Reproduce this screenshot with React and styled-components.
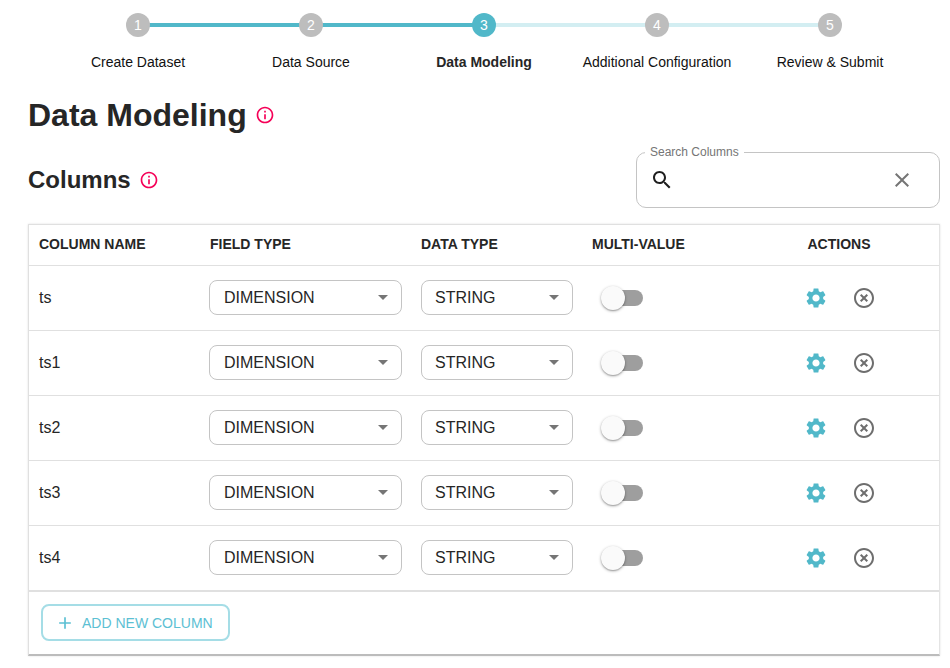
import React from "react";
import styled, { createGlobalStyle } from "styled-components";

const Global = createGlobalStyle`
  html, body { margin: 0; padding: 0; background: #fff; }
  body { font-family: "Liberation Sans", Arial, sans-serif; color: #262626; }
`;

const Page = styled.div`
  width: 950px;
  height: 668px;
  overflow: hidden;
  box-sizing: border-box;
  padding: 13px 10px 0 28px;
`;

const Stepper = styled.ol`
  list-style: none;
  margin: 0 0 0 23.5px;
  padding: 0;
  display: grid;
  grid-template-columns: repeat(5, 173px);
`;

const Step = styled.li`
  position: relative;
  display: flex;
  flex-direction: column;
  align-items: center;
  &::after {
    content: "";
    display: ${(p) => (p.$last ? "none" : "block")};
    position: absolute;
    left: calc(50% + 10px);
    width: 155px;
    top: 10px;
    height: 4px;
    background: ${(p) => (p.$done ? "#51b8c9" : "#d3eef2")};
  }
`;

const StepDot = styled.span`
  position: relative;
  z-index: 1;
  width: 24px;
  height: 24px;
  border-radius: 50%;
  background: ${(p) => (p.$active ? "#51b8c9" : "#bdbdbd")};
  color: #fff;
  font-size: 14px;
  line-height: 24px;
  text-align: center;
`;

const StepLabel = styled.span`
  margin-top: 15px;
  font-size: 14px;
  line-height: 20px;
  font-weight: ${(p) => (p.$active ? 700 : 400)};
  color: ${(p) => (p.$active ? "#262626" : "#111")};
  white-space: nowrap;
`;

const TitleRow = styled.div`
  display: flex;
  align-items: center;
  gap: 8px;
  margin-top: 21px;
  height: 44px;
`;

const Title = styled.h1`
  margin: 0;
  font-size: 32px;
  line-height: 44px;
  font-weight: 700;
  color: #262626;
`;

const ColumnsBar = styled.div`
  display: flex;
  justify-content: space-between;
  align-items: center;
  height: 56px;
  margin-top: 15px;
`;

const Heading = styled.div`
  display: flex;
  align-items: center;
  gap: 8px;
`;

const SubTitle = styled.h2`
  margin: 0;
  font-size: 24px;
  line-height: 32px;
  font-weight: 700;
  color: #262626;
`;

const SearchBox = styled.fieldset`
  align-self: flex-end;
  margin: 0;
  box-sizing: border-box;
  width: 304px;
  height: 63px;
  padding: 0 8px 6px 8px;
  border: 1px solid #c4c4c4;
  border-radius: 10px;
  display: flex;
  align-items: center;
  justify-content: space-between;
`;

const SearchLegend = styled.legend`
  padding: 0 5px;
  font-size: 12px;
  line-height: 14px;
  color: #757575;
`;

const SearchIconSlot = styled.span`
  display: flex;
  margin-left: 5px;
`;

const ClearSlot = styled.span`
  display: flex;
  margin-right: 17px;
`;

const Table = styled.div`
  box-sizing: border-box;
  width: 912px;
  height: 432px;
  margin-top: 16px;
  border: 1px solid #e0e0e0;
  border-right-color: #e4e4e4;
  border-bottom: 2px solid #bcbcbc;
  box-shadow: 0 0 2px rgba(0, 0, 0, 0.12);
`;

const Row = styled.div`
  display: grid;
  grid-template-columns: 170px 212px 171px 200px 96px;
  padding-left: 10px;
  padding-bottom: ${(p) => (p.$header ? "2px" : "0")};
  align-items: center;
  height: ${(p) => (p.$header ? "41px" : "65px")};
  box-sizing: border-box;
  border-bottom: 1px solid #e0e0e0;
`;

const HeadCell = styled.div`
  font-size: 14px;
  font-weight: 700;
  color: #262626;
  text-align: ${(p) => (p.$center ? "center" : "left")};
  padding-right: ${(p) => (p.$center ? "2px" : "0")};
  padding-left: ${(p) => p.$inset || 0}px;
  white-space: nowrap;
`;

const NameCell = styled.div`
  font-size: 16px;
  color: #262626;
`;

const Select = styled.div`
  box-sizing: border-box;
  width: ${(p) => p.$w}px;
  height: 35px;
  margin-top: -1px;
  margin-bottom: 1px;
  border: 1px solid #c4c4c4;
  border-radius: 8px;
  padding: 0 6px 0 ${(p) => p.$pad}px;
  display: flex;
  align-items: center;
  justify-content: space-between;
  font-size: 16px;
  color: #262626;
`;

const SelectText = styled.span`
  position: relative;
  top: 0.5px;
`;

const SwitchTrack = styled.span`
  position: relative;
  display: block;
  width: 31px;
  height: 16px;
  margin-left: 20px;
  border-radius: 8px;
  background: #9e9e9e;
`;

const SwitchThumb = styled.span`
  position: absolute;
  left: -11px;
  top: -4px;
  width: 24px;
  height: 24px;
  border-radius: 50%;
  background: #fafafa;
  box-shadow: 0 1px 3px rgba(0, 0, 0, 0.35), 0 1px 1px rgba(0, 0, 0, 0.14);
`;

const Actions = styled.div`
  display: grid;
  grid-template-columns: 48px 48px;
  justify-items: center;
  align-items: center;
`;

const Footer = styled.div`
  border-top: 1px solid #e0e0e0;
  padding: 12px 12px;
`;

const AddButton = styled.button`
  box-sizing: border-box;
  width: 189px;
  height: 37px;
  display: flex;
  align-items: center;
  gap: 7px;
  padding: 0 0 0 12px;
  background: #fff;
  border: 2px solid #a5dde6;
  border-radius: 8px;
  font-family: "Liberation Sans", Arial, sans-serif;
  font-size: 14px;
  color: #5cc0d3;
  white-space: nowrap;
`;

const Icon = ({ d, size = 24, color = "currentColor" }) => (
  <svg width={size} height={size} viewBox="0 0 24 24" fill={color} aria-hidden="true" style={{ display: "block" }}>
    <path d={d} />
  </svg>
);

const P = {
  info: "M11 7h2v2h-2zm0 4h2v6h-2zm1-9C6.48 2 2 6.48 2 12s4.48 10 10 10 10-4.48 10-10S17.52 2 12 2zm0 18c-4.41 0-8-3.59-8-8s3.59-8 8-8 8 3.59 8 8-3.59 8-8 8z",
  search: "M15.5 14h-.79l-.28-.27C15.41 12.59 16 11.11 16 9.5 16 5.91 13.09 3 9.5 3S3 5.91 3 9.5 5.91 16 9.5 16c1.61 0 3.09-.59 4.23-1.57l.27.28v.79l5 4.99L20.49 19l-4.99-5zm-6 0C7.01 14 5 11.99 5 9.5S7.01 5 9.5 5 14 7.01 14 9.5 11.99 14 9.5 14z",
  close: "M19 6.41L17.59 5 12 10.59 6.41 5 5 6.41 10.59 12 5 17.59 6.41 19 12 13.41 17.59 19 19 17.59 13.41 12 19 6.41z",
  add: "M19 13h-6v6h-2v-6H5v-2h6V5h2v6h6v2z",
  drop: "M7 10l5 5 5-5z",
  gear: "M19.14,12.94c0.04-0.3,0.06-0.61,0.06-0.94c0-0.32-0.02-0.64-0.07-0.94l2.03-1.58c0.18-0.14,0.23-0.41,0.12-0.61 l-1.92-3.32c-0.12-0.22-0.37-0.29-0.59-0.22l-2.39,0.96c-0.5-0.38-1.03-0.7-1.62-0.94L14.4,2.81c-0.04-0.24-0.24-0.41-0.48-0.41 h-3.84c-0.24,0-0.43,0.17-0.47,0.41L9.25,5.35C8.66,5.59,8.12,5.92,7.63,6.29L5.24,5.33c-0.22-0.08-0.47,0-0.59,0.22L2.74,8.87 C2.62,9.08,2.66,9.34,2.86,9.48l2.03,1.58C4.84,11.36,4.8,11.69,4.8,12s0.02,0.64,0.07,0.94l-2.03,1.58 c-0.18,0.14-0.23,0.41-0.12,0.61l1.92,3.32c0.12,0.22,0.37,0.29,0.59,0.22l2.39-0.96c0.5,0.38,1.03,0.7,1.62,0.94l0.36,2.54 c0.05,0.24,0.24,0.41,0.48,0.41h3.84c0.24,0,0.44-0.17,0.47-0.41l0.36-2.54c0.59-0.24,1.13-0.56,1.62-0.94l2.39,0.96 c0.22,0.08,0.47,0,0.59-0.22l1.92-3.32c0.12-0.22,0.07-0.47-0.12-0.61L19.14,12.94z M12,15.6c-1.98,0-3.6-1.62-3.6-3.6 s1.62-3.6,3.6-3.6s3.6,1.62,3.6,3.6S13.98,15.6,12,15.6z",
  off: "M14.59 8L12 10.59 9.41 8 8 9.41 10.59 12 8 14.59 9.41 16 12 13.41 14.59 16 16 14.59 13.41 12 16 9.41 14.59 8zM12 2C6.47 2 2 6.47 2 12s4.47 10 10 10 10-4.47 10-10S17.53 2 12 2zm0 18c-4.41 0-8-3.59-8-8s3.59-8 8-8 8 3.59 8 8-3.59 8-8 8z",
};

const steps = ["Create Dataset", "Data Source", "Data Modeling", "Additional Configuration", "Review & Submit"];
const rows = ["ts", "ts1", "ts2", "ts3", "ts4"];

export default function App() {
  return (
    <Page>
      <Global />
      <Stepper>
        {steps.map((s, i) => (
          <Step key={s} $done={i < 2} $last={i === 4}>
            <StepDot $active={i === 2}>{i + 1}</StepDot>
            <StepLabel $active={i === 2}>{s}</StepLabel>
          </Step>
        ))}
      </Stepper>
      <TitleRow>
        <Title>Data Modeling</Title>
        <Icon d={P.info} size={20} color="#f50057" />
      </TitleRow>
      <ColumnsBar>
        <Heading>
          <SubTitle>Columns</SubTitle>
          <Icon d={P.info} size={20} color="#f50057" />
        </Heading>
        <SearchBox>
          <SearchLegend>Search Columns</SearchLegend>
          <SearchIconSlot>
            <Icon d={P.search} color="#1f1f1f" />
          </SearchIconSlot>
          <ClearSlot>
            <Icon d={P.close} color="#757575" />
          </ClearSlot>
        </SearchBox>
      </ColumnsBar>
      <Table>
        <Row $header>
          <HeadCell>COLUMN NAME</HeadCell>
          <HeadCell $inset={1}>FIELD TYPE</HeadCell>
          <HeadCell>DATA TYPE</HeadCell>
          <HeadCell>MULTI-VALUE</HeadCell>
          <HeadCell $center>ACTIONS</HeadCell>
        </Row>
        {rows.map((r) => (
          <Row key={r}>
            <NameCell>{r}</NameCell>
            <Select $w={193} $pad={14}>
              <SelectText>DIMENSION</SelectText>
              <Icon d={P.drop} color="#757575" />
            </Select>
            <Select $w={152} $pad={13}>
              <SelectText>STRING</SelectText>
              <Icon d={P.drop} color="#757575" />
            </Select>
            <SwitchTrack>
              <SwitchThumb />
            </SwitchTrack>
            <Actions>
              <Icon d={P.gear} color="#51b8c9" />
              <Icon d={P.off} color="#6e6e6e" />
            </Actions>
          </Row>
        ))}
        <Footer>
          <AddButton>
            <Icon d={P.add} size={20} color="#5cc0d3" />
            ADD NEW COLUMN
          </AddButton>
        </Footer>
      </Table>
    </Page>
  );
}
